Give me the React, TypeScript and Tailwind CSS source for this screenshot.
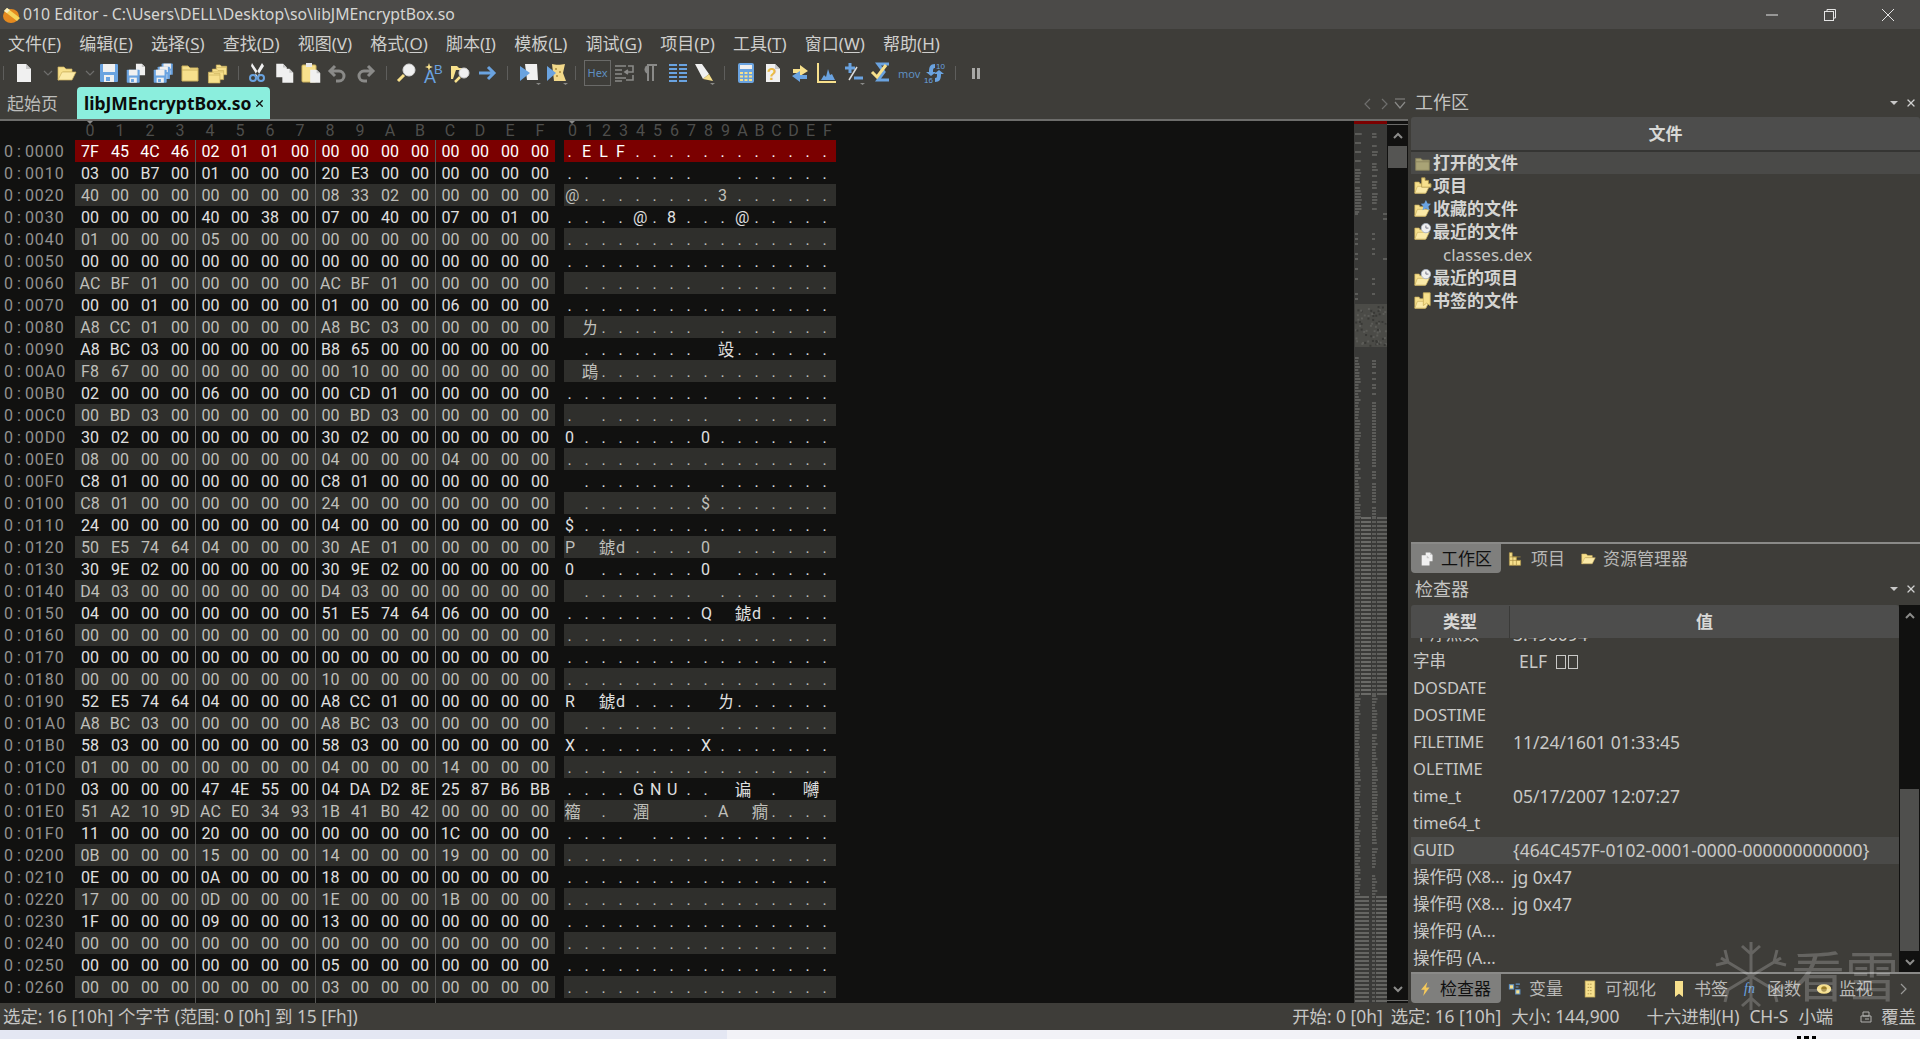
import type { ReactNode } from 'react';
import { X } from 'lucide-react';

const Z = '00 00 00 00 00 00 00 00 00 00 00 00 00 00 00 00';
const ROWS = [
  '7F 45 4C 46 02 01 01 00 00 00 00 00 00 00 00 00',
  '03 00 B7 00 01 00 00 00 20 E3 00 00 00 00 00 00',
  '40 00 00 00 00 00 00 00 08 33 02 00 00 00 00 00',
  '00 00 00 00 40 00 38 00 07 00 40 00 07 00 01 00',
  '01 00 00 00 05 00 00 00 00 00 00 00 00 00 00 00',
  Z,
  'AC BF 01 00 00 00 00 00 AC BF 01 00 00 00 00 00',
  '00 00 01 00 00 00 00 00 01 00 00 00 06 00 00 00',
  'A8 CC 01 00 00 00 00 00 A8 BC 03 00 00 00 00 00',
  'A8 BC 03 00 00 00 00 00 B8 65 00 00 00 00 00 00',
  'F8 67 00 00 00 00 00 00 00 10 00 00 00 00 00 00',
  '02 00 00 00 06 00 00 00 00 CD 01 00 00 00 00 00',
  '00 BD 03 00 00 00 00 00 00 BD 03 00 00 00 00 00',
  '30 02 00 00 00 00 00 00 30 02 00 00 00 00 00 00',
  '08 00 00 00 00 00 00 00 04 00 00 00 04 00 00 00',
  'C8 01 00 00 00 00 00 00 C8 01 00 00 00 00 00 00',
  'C8 01 00 00 00 00 00 00 24 00 00 00 00 00 00 00',
  '24 00 00 00 00 00 00 00 04 00 00 00 00 00 00 00',
  '50 E5 74 64 04 00 00 00 30 AE 01 00 00 00 00 00',
  '30 9E 02 00 00 00 00 00 30 9E 02 00 00 00 00 00',
  'D4 03 00 00 00 00 00 00 D4 03 00 00 00 00 00 00',
  '04 00 00 00 00 00 00 00 51 E5 74 64 06 00 00 00',
  Z,
  Z,
  '00 00 00 00 00 00 00 00 10 00 00 00 00 00 00 00',
  '52 E5 74 64 04 00 00 00 A8 CC 01 00 00 00 00 00',
  'A8 BC 03 00 00 00 00 00 A8 BC 03 00 00 00 00 00',
  '58 03 00 00 00 00 00 00 58 03 00 00 00 00 00 00',
  '01 00 00 00 00 00 00 00 04 00 00 00 14 00 00 00',
  '03 00 00 00 47 4E 55 00 04 DA D2 8E 25 87 B6 BB',
  '51 A2 10 9D AC E0 34 93 1B 41 B0 42 00 00 00 00',
  '11 00 00 00 20 00 00 00 00 00 00 00 1C 00 00 00',
  '0B 00 00 00 15 00 00 00 14 00 00 00 19 00 00 00',
  '0E 00 00 00 0A 00 00 00 18 00 00 00 00 00 00 00',
  '17 00 00 00 0D 00 00 00 1E 00 00 00 1B 00 00 00',
  '1F 00 00 00 09 00 00 00 13 00 00 00 00 00 00 00',
  Z,
  '00 00 00 00 00 00 00 00 05 00 00 00 00 00 00 00',
  '00 00 00 00 00 00 00 00 03 00 00 00 00 00 00 00',
];

// double byte sequences the editor shows as one wide glyph, and odd single cells
const ASCII_FIX: Record<number, Record<number, string | [number, number]>> = {
  6: { 1: '.', 9: '.' },
  8: { 0: [0xa8, 0xcc], 9: '.' },
  9: { 1: '.', 8: [0xb8, 0x65] },
  10: { 0: [0xf8, 0x67] },
  18: { 1: [0xe5, 0x74] },
  21: { 9: [0xe5, 0x74] },
  25: { 1: [0xe5, 0x74], 8: [0xa8, 0xcc] },
  26: { 1: '.', 9: '.' },
  29: { 9: [0xda, 0xd2], 12: '.', 13: [0x87, 0xb6] },
  30: { 0: [0xbb, 0x51], 3: [0x9d, 0xac], 6: '', 10: [0xb0, 0x42] },
};

const gbk = (a: number, b: number) => new TextDecoder('gbk').decode(new Uint8Array([a, b]));

function asciiRow(rowIdx: number, bytes: number[]) {
  const fix = ASCII_FIX[rowIdx] || {};
  const cells: { text: string; wide: boolean }[] = [];
  for (let i = 0; i < 16; i++) {
    const f = fix[i];
    if (Array.isArray(f)) {
      cells.push({ text: gbk(f[0], f[1]), wide: true });
      cells.push({ text: '', wide: false });
      i++;
    } else if (typeof f === 'string') {
      cells.push({ text: f, wide: false });
    } else {
      const b = bytes[i];
      const text = b >= 0x80 ? '' : b < 0x20 || b === 0x7f ? '.' : String.fromCharCode(b);
      cells.push({ text, wide: false });
    }
  }
  return cells;
}

const HEXDIGITS = '0123456789ABCDEF'.split('');

function HexPane() {
  return (
    <div className="w-[1354px] h-[882px] bg-[#111110] overflow-hidden font-['Roboto',sans-serif] text-[16px] shrink-0 relative">
      <div className="flex h-[19px] items-center text-[#4e4e4c]">
        <div className="w-[75px] shrink-0" />
        {HEXDIGITS.map((d) => (
          <div key={d} className="w-[30px] text-center shrink-0">
            {d}
          </div>
        ))}
        <div className="w-[9px] shrink-0" />
        {HEXDIGITS.map((d) => (
          <div key={d} className="w-[17px] text-center shrink-0">
            {d}
          </div>
        ))}
      </div>
      <div className="absolute left-[87px] top-0 border-x-[3px] border-t-[3px] border-x-transparent border-t-[#8a8a8a]" />
      <div className="absolute left-[569px] top-0 border-x-[3px] border-t-[3px] border-x-transparent border-t-[#8a8a8a]" />
      {ROWS.map((row, r) => {
        const bytes = row.split(' ').map((h) => parseInt(h, 16));
        const first = r === 0;
        const stripe = r % 2 === 0 && !first;
        const tone = first ? 'text-white' : stripe ? 'text-[#bfbfba]' : 'text-[#e0e0e0]';
        const band = first ? 'bg-[#7b0000]' : stripe ? 'bg-[#2f2f2c]' : '';
        const off = r.toString(16).toUpperCase().padStart(3, '0') + '0';
        return (
          <div key={r} className="flex h-[22px] leading-[24px]">
            <div className="w-[75px] pl-[4px] shrink-0 text-[#929290] tracking-[1px]">
              0<span className="mx-[3px]">:</span>
              {off}
            </div>
            <div className={`flex shrink-0 ${band} ${tone}`}>
              {row.split(' ').map((h, i) => (
                <div
                  key={i}
                  className={
                    i > 0 && i % 4 === 0
                      ? 'w-[30px] text-center border-l border-[#565654]'
                      : 'w-[30px] text-center'
                  }
                >
                  {h}
                </div>
              ))}
            </div>
            <div className="w-[9px] shrink-0" />
            <div className={`flex shrink-0 ${band} ${tone}`}>
              {asciiRow(r, bytes).map((c, i) => (
                <div key={i} className="w-[17px] shrink-0 whitespace-nowrap">
                  {c.wide ? (
                    <span
                      className={
                        r === 30 && i === 0
                          ? "w-[17px] flex justify-center leading-[22px] font-['Noto_Sans_CJK_SC'] text-[16.5px]"
                          : "w-[18px] ml-[17px] flex justify-center leading-[22px] font-['Noto_Sans_CJK_SC'] text-[16.5px]"
                      }
                    >
                      {c.text}
                    </span>
                  ) : (
                    <span className="block w-[9px] ml-px text-center">{c.text}</span>
                  )}
                </div>
              ))}
            </div>
          </div>
        );
      })}
      <div className="flex h-[6px]">
        <div className="w-[75px] shrink-0" />
        {[0, 1, 2, 3].map((g) => (
          <div key={g} className={g > 0 ? 'w-[120px] border-l border-[#565654]' : 'w-[120px]'} />
        ))}
      </div>
    </div>
  );
}

// overview strip next to the scrollbar: a little noisy on purpose
function makeMinimap() {
  let seed = 7;
  const rnd = () => {
    seed = (seed * 16807) % 2147483647;
    return seed / 2147483647;
  };
  const rects: { x: number; y: number; w: number; h: number; c: string }[] = [];
  const line = (y: number, x: number, w: number, c = '#5c5c59') => rects.push({ x, y, w, h: 2, c });
  for (let y = 12; y < 92; y += 3) {
    if (rnd() < 0.7) line(y, 1, 4 + rnd() * 3);
    if (rnd() < 0.6) line(y, 18, 4 + rnd() * 2);
  }
  for (let y = 92; y < 180; y += 5) {
    if (rnd() < 0.4) line(y, 1, 3);
    if (rnd() < 0.4) line(y, 18, 3);
    if (rnd() < 0.15) line(y, 29, 4);
  }
  rects.push({ x: 1, y: 183, w: 32, h: 43, c: '#4b4b47' });
  for (let i = 0; i < 70; i++) {
    rects.push({ x: 1 + rnd() * 30, y: 184 + rnd() * 40, w: 2, h: 2, c: rnd() < 0.5 ? '#393936' : '#5c5c58' });
  }
  for (let y = 236; y < 396; y += 3) {
    line(y, 1, 3 + rnd() * 3);
    if (rnd() < 0.85) line(y, 18, 4);
  }
  for (let y = 396; y < 574; y += 4) {
    line(y, 1, 5);
    line(y, 7, 10, '#6a6a67');
    line(y, 18, 4);
    line(y, 23, 10, '#60605d');
  }
  for (let y = 574; y < 775; y += 3) {
    line(y, 1, 3 + rnd() * 3);
    if (rnd() < 0.9) line(y, 18, 3 + rnd() * 3);
  }
  for (let y = 775; y < 882; y += 4) {
    line(y, 1, 14, '#656562');
    line(y, 18, 3);
    line(y, 22, 11, '#656562');
  }
  return rects;
}
const MINIMAP = makeMinimap();

function Minimap() {
  return (
    <svg width="33" height="882" className="shrink-0 bg-[#3a3a38]">
      {MINIMAP.map((r, i) => (
        <rect key={i} x={r.x} y={r.y} width={r.w} height={r.h} fill={r.c} />
      ))}
      <rect x="0" y="0" width="33" height="3" fill="#7b0000" />
    </svg>
  );
}

const Chevron = ({ down }: { down?: boolean }) => (
  <svg width="12" height="8" viewBox="0 0 12 8" fill="none" stroke="#8c8c8a" strokeWidth="2">
    <path d={down ? 'M2 2l4 4 4-4' : 'M2 6l4-4 4 4'} />
  </svg>
);

function Scroll({ children }: { children: ReactNode }) {
  return <div className="flex flex-col bg-[#111110] shrink-0">{children}</div>;
}

const Y = '#f7e08c';
const YD = '#cdb35f';
const B = '#6aa3e0';
const W = '#f0f0f0';
const G = '#8a8a88';

function Ico({ children, size = 20 }: { children: ReactNode; size?: number }) {
  return (
    <svg width={size} height={size} viewBox="0 0 20 20" className="shrink-0 overflow-visible">
      {children}
    </svg>
  );
}

const Floppy = ({ x = 0, y = 0, s = 1 }: { x?: number; y?: number; s?: number }) => (
  <g transform={`translate(${x} ${y}) scale(${s})`}>
    <rect x="1" y="1" width="18" height="18" rx="1" fill={B} />
    <rect x="4" y="1" width="12" height="8" fill={W} />
    <rect x="5" y="12" width="10" height="7" fill={W} />
    <rect x="7" y="14" width="4" height="4" fill={B} />
  </g>
);
const FolderClosed = ({ x = 0, y = 0, s = 1 }: { x?: number; y?: number; s?: number }) => (
  <g transform={`translate(${x} ${y}) scale(${s})`}>
    <path d="M2 3h6l2 2h8v13H2z" fill={Y} stroke={YD} strokeWidth="1" />
    <path d="M2 7h16" stroke={YD} />
  </g>
);
const Page = ({ x = 0, y = 0, s = 1 }: { x?: number; y?: number; s?: number }) => (
  <g transform={`translate(${x} ${y}) scale(${s})`}>
    <path d="M3 1h9l5 5v13H3z" fill={W} />
    <path d="M12 1v5h5" fill="#c8c8c8" />
  </g>
);
const OpenFolder = () => (
  <>
    <path d="M1 4h6l2 2h6v3H6l-4 8H1z" fill={Y} stroke={YD} strokeWidth=".7" />
    <path d="M5 9h14l-4 8H1z" fill="#fbeaa8" stroke={YD} strokeWidth=".7" />
  </>
);
const Menu3 = () => <path d="M16 20l2.5 2 2.5-2z" fill="#8a8a88" />;

const TOOL = {
  doc: (
    <Ico>
      <Page />
    </Ico>
  ),
  open: (
    <Ico>
      <OpenFolder />
    </Ico>
  ),
  save: (
    <Ico>
      <Floppy />
    </Ico>
  ),
  saveAs: (
    <Ico>
      <Page x={8} s={0.65} />
      <Floppy y={6} s={0.72} />
    </Ico>
  ),
  saveAll: (
    <Ico>
      <Floppy x={8} s={0.62} />
      <Floppy x={4} y={3} s={0.68} />
      <Floppy y={6} s={0.72} />
    </Ico>
  ),
  folder: (
    <Ico>
      <FolderClosed />
    </Ico>
  ),
  folders: (
    <Ico>
      <FolderClosed x={8} s={0.65} />
      <FolderClosed x={4} y={4} s={0.7} />
      <FolderClosed y={7} s={0.72} />
    </Ico>
  ),
  cut: (
    <Ico>
      <path d="M5 0l8 12-2 2L4 3zM15 0l-7 12 2 2 7-11z" fill={W} />
      <circle cx="6" cy="15" r="3" fill="none" stroke={B} strokeWidth="2" />
      <circle cx="14" cy="15" r="3" fill="none" stroke={B} strokeWidth="2" />
    </Ico>
  ),
  copy: (
    <Ico>
      <Page x={0} s={0.75} />
      <Page x={6} y={5} s={0.78} />
    </Ico>
  ),
  paste: (
    <Ico>
      <rect x="1" y="2" width="14" height="17" rx="1" fill={Y} stroke={YD} />
      <rect x="5" y="0" width="6" height="4" fill="#e8e8e8" />
      <Page x={7} y={6} s={0.72} />
    </Ico>
  ),
  undo: (
    <Ico>
      <path d="M7 3L2 8l5 5M2 8h9a5 5 0 0 1 0 10H8" fill="none" stroke={G} strokeWidth="3" />
    </Ico>
  ),
  redo: (
    <Ico>
      <path d="M13 3l5 5-5 5M18 8H9a5 5 0 0 0 0 10h3" fill="none" stroke={G} strokeWidth="3" />
    </Ico>
  ),
  find: (
    <Ico>
      <circle cx="12" cy="7" r="6" fill={W} stroke="#d8d8d8" />
      <path d="M7 12l-6 6" stroke={Y} strokeWidth="3" />
    </Ico>
  ),
  replace: (
    <Ico>
      <text x="0" y="20" fontSize="18" fill={B} fontFamily="Liberation Sans">
        A
      </text>
      <text x="10" y="11" fontSize="13" fill={B} fontFamily="Liberation Sans">
        B
      </text>
      <path d="M5 0l1 3 3 1-3 1-1 3-1-3-3-1 3-1z" fill={Y} />
    </Ico>
  ),
  findFiles: (
    <Ico>
      <path d="M0 3h6l2 2h6v2H5l-3 9H0z" fill={Y} />
      <circle cx="13" cy="10" r="5" fill={W} stroke="#d0d0d0" />
      <path d="M9 14l-5 5" stroke={Y} strokeWidth="2.5" />
    </Ico>
  ),
  goto: (
    <Ico>
      <path d="M1 10h14M10 4l6 6-6 6" fill="none" stroke={B} strokeWidth="3" />
    </Ico>
  ),
  mark1: (
    <Ico>
      <path d="M5 1h12l1 16H7z" fill={W} />
      <path d="M0 3l10 7-10 8z" fill={B} />
      <Menu3 />
    </Ico>
  ),
  mark2: (
    <Ico>
      <path d="M5 1c3 1 9 1 13 0l-2 9 3 8H7z" fill="#f2d98a" />
      <path d="M8 6h2M12 9h2M9 13h2" stroke="#a9893d" strokeWidth="1.5" />
      <path d="M0 3l9 7-9 8z" fill={B} />
      <Menu3 />
    </Ico>
  ),
  wrap: (
    <Ico>
      <path d="M1 3h11M1 7h7M1 11h7M1 15h11M1 18h7" stroke={G} strokeWidth="1.5" />
      <path d="M14 3h5v6h-7M14 7l-3 2 3 2M19 12v5h-7" fill="none" stroke={G} strokeWidth="1.6" />
    </Ico>
  ),
  para: (
    <Ico>
      <path d="M8 18V2h9M13 18V2" fill="none" stroke={G} strokeWidth="2" />
      <path d="M9 2a4.5 4.5 0 0 0 0 9z" fill={G} />
    </Ico>
  ),
  cols: (
    <Ico>
      <path d="M1 2h8M11 2h8M1 6h8M11 6h8M1 10h8M11 10h8M1 14h8M11 14h8M1 18h8M11 18h8" stroke={B} strokeWidth="2" />
    </Ico>
  ),
  eraser: (
    <Ico>
      <path d="M1 1h7l7 10-6 5z" fill={W} />
      <path d="M9 16l6-5 4 7z" fill={Y} />
      <Menu3 />
    </Ico>
  ),
  calc: (
    <Ico>
      <rect x="2" y="0" width="16" height="20" rx="2" fill={B} />
      <rect x="4" y="2" width="12" height="4" fill={W} />
      <path d="M4 9h3v2H4zM8.500 9h3v2h-3zM13 9h3v2h-3zM4 12.500h3v2H4zM8.500 12.500h3v2h-3zM13 12.500h3v2h-3zM4 16h3v2H4zM8.500 16h3v2h-3zM13 16h3v2h-3z" fill={Y} />
    </Ico>
  ),
  help: (
    <Ico>
      <Page />
      <text x="4" y="17" fontSize="16" fontWeight="700" fill="#e9b949" fontFamily="Liberation Sans">
        ?
      </text>
    </Ico>
  ),
  compare: (
    <Ico>
      <path d="M10 2l8 6-8 5v-3H3V6h7z" fill={Y} />
      <path d="M10 8l-8 5 8 6v-3h7v-4h-7z" fill={B} />
    </Ico>
  ),
  hist: (
    <Ico>
      <path d="M1 0v19h18" fill="none" stroke={Y} strokeWidth="2" />
      <path d="M4 17l3-5 2 2 2-8 2 6 2-1 3 6z" fill={B} />
    </Ico>
  ),
  plusMinus: (
    <Ico>
      <path d="M1 5h10M6 0v10" stroke={B} strokeWidth="3" />
      <path d="M13 4L5 17" stroke="#ddd" strokeWidth="1.5" />
      <path d="M10 15h9" stroke={B} strokeWidth="3" />
      <Menu3 />
    </Ico>
  ),
  check: (
    <Ico>
      <path d="M18 1H7l6 8-6 8h11" fill="none" stroke={B} strokeWidth="3" />
      <path d="M1 9l5 5 9-12" fill="none" stroke={Y} strokeWidth="3" />
    </Ico>
  ),
  convert: (
    <Ico>
      <path d="M10 1C5 1 4 4 4 9H1l5 4 5-4H8c0-3 0-4 2-4z" fill={B} />
      <path d="M10 19c5 0 6-3 6-8h3l-5-4-5 4h3c0 3 0 4-2 4z" fill={B} />
      <text x="11" y="6" fontSize="8" fill={B} fontFamily="Liberation Sans">
        10
      </text>
      <text x="-1" y="20" fontSize="8" fill={B} fontFamily="Liberation Sans">
        16
      </text>
    </Ico>
  ),
};

const Sep = ({ cls }: { cls: string }) => <div className={`w-px h-[14px] bg-[#5e5e5c] shrink-0 ${cls}`} />;
const SmallChevron = ({ cls }: { cls: string }) => (
  <svg width="12" height="8" viewBox="0 0 12 8" fill="none" stroke="#6e6e6c" strokeWidth="1.2" className={`shrink-0 ${cls}`}>
    <path d="M2 2l4 4 4-4" />
  </svg>
);

function Toolbar() {
  return (
    <div className="h-[30px] flex items-center shrink-0">
      <Sep cls="ml-[3px]" />
      <div className="ml-[10px]">{TOOL.doc}</div>
      <SmallChevron cls="ml-2" />
      <div className="ml-[3px]">{TOOL.open}</div>
      <SmallChevron cls="ml-[7px]" />
      <div className="ml-[3px] flex gap-[7px]">
        {TOOL.save}
        {TOOL.saveAs}
        {TOOL.saveAll}
        {TOOL.folder}
        {TOOL.folders}
      </div>
      <Sep cls="ml-[11px]" />
      <div className="ml-2 flex gap-[7px]">
        {TOOL.cut}
        {TOOL.copy}
        {TOOL.paste}
        {TOOL.undo}
        {TOOL.redo}
      </div>
      <Sep cls="ml-[11px]" />
      <div className="ml-[10px] flex gap-[7px]">
        {TOOL.find}
        {TOOL.replace}
        {TOOL.findFiles}
        {TOOL.goto}
      </div>
      <Sep cls="ml-[9px]" />
      <div className="ml-3 flex gap-[7px]">
        {TOOL.mark1}
        {TOOL.mark2}
      </div>
      <Sep cls="ml-2" />
      <div className="ml-2 w-[27px] h-[26px] border border-[#6a6a68] flex items-center justify-center text-[11px] text-[#5f8fc0] shrink-0">
        Hex
      </div>
      <div className="ml-[3px]">{TOOL.wrap}</div>
      <div className="ml-[6px]">{TOOL.para}</div>
      <div className="ml-2">{TOOL.cols}</div>
      <div className="ml-[6px]">{TOOL.eraser}</div>
      <Sep cls="ml-[10px]" />
      <div className="ml-[11px] flex gap-[7px] items-center">
        {TOOL.calc}
        {TOOL.help}
        {TOOL.compare}
        {TOOL.hist}
        {TOOL.plusMinus}
        {TOOL.check}
        <div className="w-5 text-center text-[11px] text-[#5f8fc0] leading-none">mov</div>
        {TOOL.convert}
      </div>
      <Sep cls="ml-[10px]" />
      <div className="ml-[16px] flex gap-[2px]">
        <div className="w-[3px] h-[11px] bg-[#a8a8a6]" />
        <div className="w-[3px] h-[11px] bg-[#a8a8a6]" />
      </div>
    </div>
  );
}

const MENUS: [string, string][] = [
  ['文件', 'F'],
  ['编辑', 'E'],
  ['选择', 'S'],
  ['查找', 'D'],
  ['视图', 'V'],
  ['格式', 'O'],
  ['脚本', 'I'],
  ['模板', 'L'],
  ['调试', 'G'],
  ['项目', 'P'],
  ['工具', 'T'],
  ['窗口', 'W'],
  ['帮助', 'H'],
];

function PanelControls() {
  return (
    <div className="flex items-center gap-[7px] pr-[3px]">
      <div className="border-x-[4px] border-t-[4px] border-x-transparent border-t-[#c8c8c8]" />
      <X size={12} strokeWidth={2.5} className="text-[#d0d0d0]" />
    </div>
  );
}

const folderOver = (over: ReactNode) => (
  <Ico size={17}>
    <path d="M1 6h5l1 2h6v11H1z" fill={Y} stroke={YD} strokeWidth=".8" />
    <path d="M4 11h14l-4 8H1z" fill="#fbeaa8" stroke={YD} strokeWidth=".8" />
    {over}
  </Ico>
);

const Grid = () => <path d="M9 1h4v3h4v4h3v4H9z" fill={Y} stroke="#b39b4e" strokeWidth="1" />;
const Clock = () => (
  <>
    <circle cx="14" cy="6" r="5.500" fill={W} stroke="#aab4c4" />
    <path d="M14 3v3h3" fill="none" stroke="#667" />
  </>
);

const TREE: { icon: ReactNode; label: string; plain?: boolean; active?: boolean }[] = [
  {
    icon: (
      <Ico size={17}>
        <path d="M2 4h6l2 2h8v12H2z" fill="#a9a376" stroke="#86815b" />
        <path d="M2 8h16" stroke="#86815b" />
      </Ico>
    ),
    label: '打开的文件',
    active: true,
  },
  { icon: folderOver(<Grid />), label: '项目' },
  { icon: folderOver(<path d="M14 0l2 4 4 .5-3 3 1 4.500-4-2-4 2 1-4.500-3-3 4-.5z" fill={B} />), label: '收藏的文件' },
  { icon: folderOver(<Clock />), label: '最近的文件' },
  { icon: null, label: 'classes.dex', plain: true },
  { icon: folderOver(<Clock />), label: '最近的项目' },
  { icon: folderOver(<path d="M11 1h8v15l-4-3-4 3z" fill={Y} stroke={YD} />), label: '书签的文件' },
];

const TABS_TOP: { icon: ReactNode; label: string }[] = [
  {
    icon: (
      <Ico size={14}>
        <path d="M2 1h4v6h6v5h6v7H2z" fill={Y} stroke="#b39b4e" />
        <path d="M2 7h16M2 12h16M7 7v12M12 7v12" stroke="#a98f44" strokeWidth="1" />
      </Ico>
    ),
    label: '项目',
  },
  {
    icon: (
      <Ico size={15}>
        <OpenFolder />
      </Ico>
    ),
    label: '资源管理器',
  },
];

const TABS_BOTTOM: { icon: ReactNode; label: string; cls: string }[] = [
  {
    icon: (
      <Ico size={14}>
        <path d="M2 4h6v6H2zM11 11h6v6h-6zM11 3h6M11 7h4" fill={Y} stroke="#5f95cc" strokeWidth="1.5" />
      </Ico>
    ),
    label: '变量',
    cls: 'ml-[7px] w-[74px]',
  },
  {
    icon: (
      <Ico size={16}>
        <rect x="4" y="0" width="12" height="20" fill={Y} stroke={YD} />
        <path d="M7 4h6M7 8h6M7 12h6M7 16h6" stroke="#a98f44" strokeDasharray="2 1" />
      </Ico>
    ),
    label: '可视化',
    cls: 'w-[89px]',
  },
  {
    icon: (
      <Ico size={16}>
        <path d="M5 0h10v20l-5-4-5 4z" fill={Y} />
      </Ico>
    ),
    label: '书签',
    cls: 'w-[73px]',
  },
  {
    icon: <span className="italic text-[#6aa3e0] text-[14px] leading-none w-[16px] font-['Liberation_Serif']">fn</span>,
    label: '函数',
    cls: 'w-[72px]',
  },
  {
    icon: (
      <Ico size={16}>
        <ellipse cx="10" cy="10" rx="9" ry="6" fill={Y} />
        <circle cx="10" cy="10" r="3.500" fill="#9b7f2c" />
      </Ico>
    ),
    label: '监视',
    cls: 'w-[72px]',
  },
];

// the two boxes after ELF are missing-glyph boxes in the real editor
const Tofu = () => <span className="inline-block w-[10px] h-[14px] border border-[#c9c9c7] ml-[2px] align-[-1px]" />;

const INSPECT: [string, ReactNode, boolean?][] = [
  ['半浮点数', '3.496094'],
  [
    '字串',
    <span className="pl-[6px]">
      ELF
      <span className="ml-[7px]" />
      <Tofu />
      <Tofu />
    </span>,
  ],
  ['DOSDATE', ''],
  ['DOSTIME', ''],
  ['FILETIME', '11/24/1601 01:33:45'],
  ['OLETIME', ''],
  ['time_t', '05/17/2007 12:07:27'],
  ['time64_t', ''],
  ['GUID', '{464C457F-0102-0001-0000-000000000000}', true],
  ['操作码 (X8...', 'jg 0x47'],
  ['操作码 (X8...', 'jg 0x47'],
  ['操作码 (A...', ''],
  ['操作码 (A...', ''],
];

function RightPanel() {
  return (
    <div className="flex-1 min-w-0 flex flex-col pl-[3px]">
      <div className="h-[29px] flex items-center justify-between shrink-0 pl-[4px] text-[18px] text-[#c4c4c2]">
        <span>工作区</span>
        <PanelControls />
      </div>
      <div className="h-[35px] shrink-0 bg-[#4d4d4c] border-b-2 border-[#353533] rounded-t-[3px] flex items-center justify-center pt-px font-bold text-[17px] text-[#d8d8d6]">
        文件
      </div>
      <div className="h-[390px] shrink-0 text-[17px] text-[#d4d4d2]">
        {TREE.map((t) => (
          <div
            key={t.label}
            className={
              (t.active ? 'h-[22px] bg-[#4a4a48] ' : 'h-[23px] ') +
              'flex items-center pl-[3px] ' +
              (t.plain ? 'pl-[32px] text-[#c4c4c2]' : 'font-bold')
            }
          >
            {t.icon}
            {!t.plain && <span className="w-[2px]" />}
            <span>{t.label}</span>
          </div>
        ))}
      </div>
      <div className="h-[2px] bg-[#8a8a88] shrink-0" />
      <div className="h-[29px] flex items-center shrink-0 text-[17px] text-[#b8b8b6]">
        <div className="w-[90px] h-full bg-[#7f7f7d] rounded-b-[4px] flex items-center pl-[9px] gap-[7px] text-[#101010]">
          <Ico size={14}>
            <Page x={6} s={0.7} />
            <Page y={4} s={0.8} />
          </Ico>
          工作区
        </div>
        {TABS_TOP.map((t, i) => (
          <div key={t.label} className={i === 0 ? 'ml-[7px] w-[73px] flex items-center gap-[9px]' : 'flex items-center gap-[7px]'}>
            {t.icon}
            {t.label}
          </div>
        ))}
      </div>
      <div className="h-[32px] flex items-center justify-between shrink-0 pl-[4px] text-[18px] text-[#c4c4c2]">
        <span>检查器</span>
        <PanelControls />
      </div>
      <div className="flex h-[367px] shrink-0">
        <div className="w-[488px] flex flex-col shrink-0">
          <div className="h-[33px] flex shrink-0 bg-[#4d4d4c] rounded-t-[3px] pt-px font-bold text-[17px] text-[#d8d8d6]">
            <div className="w-[99px] border-r border-[#3a3a38] flex items-center justify-center">类型</div>
            <div className="flex-1 flex items-center justify-center">值</div>
          </div>
          <div className="flex-1 overflow-hidden text-[#c9c9c7] text-[17px]">
            <div className="-mt-[17px]">
              {INSPECT.map(([k, v, hi], i) => (
                <div key={i} className={(hi ? 'bg-[#4a4a48] ' : '') + 'h-[27px] flex items-center pl-[2px] whitespace-pre'}>
                  <div className="w-[100px] shrink-0 overflow-hidden text-[16.5px]">{k}</div>
                  <div className="text-[17.5px]">{v}</div>
                </div>
              ))}
            </div>
          </div>
        </div>
        <div className="flex-1 flex flex-col items-center bg-[#111110]">
          <div className="h-[22px] flex items-center shrink-0">
            <Chevron />
          </div>
          <div className="flex-1" />
          <div className="w-[19px] h-[162px] bg-[#4f4f4d] shrink-0" />
          <div className="h-[21px] flex items-center shrink-0">
            <Chevron down />
          </div>
        </div>
      </div>
      <div className="h-[31px] flex items-center shrink-0 border-t-2 border-[#8a8a88] text-[17px] text-[#b8b8b6]">
        <div className="w-[90px] h-full bg-[#7f7f7d] rounded-b-[4px] flex items-center pl-[8px] gap-[7px] text-[#101010]">
          <Ico size={14}>
            <path d="M12 0L3 11h5l-2 9 9-12h-5z" fill="#f4c85a" />
          </Ico>
          检查器
        </div>
        {TABS_BOTTOM.map((t) => (
          <div key={t.label} className={`${t.cls} flex items-center gap-[7px] shrink-0`}>
            {t.icon}
            {t.label}
          </div>
        ))}
        <svg width="10" height="14" viewBox="0 0 10 14" fill="none" stroke="#9a9a98" strokeWidth="1.2" className="ml-[11px] shrink-0">
          <path d="M2 2l5 5-5 5" />
        </svg>
      </div>
    </div>
  );
}

export default function App() {
  return (
    <div className="w-[1920px] h-[1039px] relative overflow-hidden flex flex-col bg-[#3e3d39] font-['Noto_Sans','Noto_Sans_CJK_SC',sans-serif] text-[#c8c8c6]">
      <div className="h-[29px] shrink-0 bg-[#4b4a48] flex items-center pl-[2px]">
        <svg width="20" height="20" viewBox="0 0 20 20" className="shrink-0">
          <ellipse cx="9" cy="11" rx="8" ry="7" fill="#e58a1f" />
          <path d="M2 6l3-3 13 10-3 3z" fill="#f7d65c" />
          <path d="M2 6l3-3 3 2-3 3z" fill="#f9efc0" />
        </svg>
        <span className="ml-[1px] text-[15.8px] text-[#d6d6d4] whitespace-pre">{'010 Editor - C:\\Users\\DELL\\Desktop\\so\\libJMEncryptBox.so'}</span>
        <div className="ml-auto pr-[3px] flex">
          <div className="w-[58px] flex justify-center">
            <svg width="14" height="14" viewBox="0 0 14 14" stroke="#e4e4e4" strokeWidth="1" fill="none">
              <path d="M1 7h12" />
            </svg>
          </div>
          <div className="w-[58px] flex justify-center">
            <svg width="14" height="14" viewBox="0 0 14 14" stroke="#e4e4e4" strokeWidth="1" fill="none">
              <rect x="1.500" y="3.500" width="9" height="9" />
              <path d="M4 3V1.500h8.500V10H11" />
            </svg>
          </div>
          <div className="w-[58px] flex justify-center">
            <svg width="14" height="14" viewBox="0 0 14 14" stroke="#e4e4e4" strokeWidth="1" fill="none">
              <path d="M1 1l12 12M13 1L1 13" />
            </svg>
          </div>
        </div>
      </div>
      <div className="h-[29px] shrink-0 flex items-center pl-2 gap-[18.2px] text-[17px] text-[#cfcfcd]">
        {MENUS.map(([name, key]) => (
          <span key={key} className="whitespace-nowrap">
            {name}(<span className="underline underline-offset-2">{key}</span>)
          </span>
        ))}
      </div>
      <Toolbar />
      <div className="h-[915px] shrink-0 flex">
        <div className="w-[1408px] shrink-0 flex flex-col">
          <div className="h-[31px] shrink-0 flex items-end">
            <div className="w-[77px] h-[31px] pl-[7px] pt-px flex items-center text-[17px] text-[#bdbdbb]">起始页</div>
            <div className="w-[193px] h-[32px] bg-[#8beedd] rounded-t-[4px] flex items-center pl-[7px] pt-px text-[#0c0c0c] relative z-10">
              <span className="font-bold text-[17.5px]">libJMEncryptBox.so</span>
              <X size={11} strokeWidth={3} className="ml-[3px] text-[#111]" />
            </div>
            <div className="ml-auto self-center flex w-[48px] text-[#6f6f6d]">
              <svg width="16" height="14" viewBox="0 0 16 14" fill="none" stroke="#6f6f6d" strokeWidth="1.200">
                <path d="M10 2L5 7l5 5" />
              </svg>
              <svg width="16" height="14" viewBox="0 0 16 14" fill="none" stroke="#6f6f6d" strokeWidth="1.200">
                <path d="M6 2l5 5-5 5" />
              </svg>
              <svg width="16" height="14" viewBox="0 0 16 14" fill="none" stroke="#8a8a88" strokeWidth="1.200">
                <path d="M3 2h10M3 5l5 6 5-6" />
              </svg>
            </div>
          </div>
          <div className="h-[2px] bg-[#6d6d6b] shrink-0" />
          <div className="flex h-[882px]">
            <HexPane />
            <Minimap />
            <Scroll>
              <div className="w-[21px] h-[3px]" />
              <div className="h-[22px] border-t border-[#6a6a68] flex items-center justify-center shrink-0">
                <Chevron />
              </div>
              <div className="w-[19px] mx-px h-[22px] bg-[#555553] shrink-0" />
              <div className="flex-1" />
              <div className="h-[24px] border-b border-[#6a6a68] flex items-center justify-center shrink-0">
                <Chevron down />
              </div>
              <div className="h-[2px] shrink-0" />
            </Scroll>
          </div>
        </div>
        <RightPanel />
      </div>
      <div className="h-[27px] shrink-0 flex items-center text-[17.4px] text-[#c6c6c4] whitespace-nowrap">
        <span className="ml-[3px]">选定: 16 [10h] 个字节 (范围: 0 [0h] 到 15 [Fh])</span>
        <span className="ml-auto">开始: 0 [0h]</span>
        <span className="ml-[8px]">选定: 16 [10h]</span>
        <span className="ml-[10px]">大小: 144,900</span>
        <span className="ml-[27px]">十六进制(H)</span>
        <span className="ml-[10px]">CH-S</span>
        <span className="ml-[10px]">小端</span>
        <svg width="14" height="14" viewBox="0 0 14 14" fill="none" stroke="#b0b0ae" className="ml-[26px]">
          <path d="M4 2h6v4H4zM2 6h10v6H2zM6 9h4" />
        </svg>
        <span className="ml-[8px] mr-[4px]">覆盖</span>
      </div>
      <div className="flex-1 flex">
        <div className="w-[727px] bg-[#e4e7f3]" />
        <div className="flex-1 bg-[#f2f2f7] flex items-end gap-[3px] pl-[1070px]">
          <div className="w-[4px] h-[3px] bg-black" />
          <div className="w-[5px] h-[3px] bg-black" />
          <div className="w-[4px] h-[3px] bg-black" />
        </div>
      </div>

      <div className="absolute left-[1712px] top-[942px] flex items-center pointer-events-none opacity-[0.2]">
        <svg width="78" height="68" viewBox="0 0 78 68" fill="none" stroke="#ffffff" strokeWidth="3">
          <path d="M39 0v68M9 16l60 36M69 16L9 52M39 12l-9-8M39 12l9-8M39 56l-9 8M39 56l9 8M16 20l-12 3M16 20L13 8M62 48l12-3M62 48l3 12M62 20l12 3M62 20l3-12M16 48L4 45M16 48l-3 12" />
        </svg>
        <span className="text-[54px] leading-none text-white whitespace-nowrap ml-[1px]">看雪</span>
      </div>
    </div>
  );
}
